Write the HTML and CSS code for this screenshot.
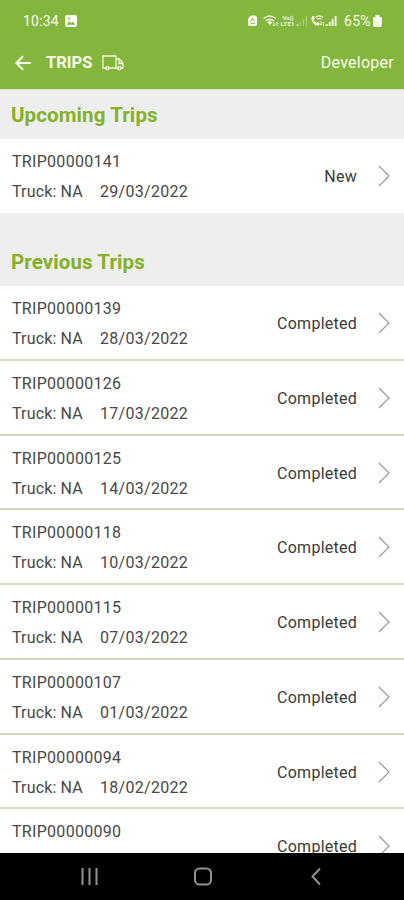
FILE: index.html
```html
<!DOCTYPE html>
<html lang="en">
<head>
<meta charset="utf-8">
<meta name="viewport" content="width=device-width, initial-scale=1">
<title>Trips</title>
<link rel="stylesheet" href="styles.css">
</head>
<body>
<div class="screen">
  <header class="top">
    <div class="status">
      <span class="clock">10:34</span>
      <svg class="picture" width="12" height="12" viewBox="0 0 12 12"><rect width="12" height="12" rx="2" fill="#fbfff0"/><path d="M1.8 9.8 4.5 6.2l1.8 2 1.6-1.8 2.4 3.4z" fill="#84b63d"/><circle cx="4" cy="3.6" r="1" fill="#84b63d"/></svg>
      <svg class="signals" width="92" height="14" viewBox="0 0 92 14">
        <path d="M0 4.500 3 1.500h3.500q2.500 0 2.500 2.500v6q0 2-2 2h-5q-2 0-2-2z" fill="#fbfff0"/>
        <path d="M2.500 7.500 4.500 4.500l2 3M2.800 9.500h3.800" fill="none" stroke="#84b63d" stroke-width="1"/>
        <path d="M15.500 4.500q6-5 12.500 0M17.800 7q4-3.300 8 0" fill="none" stroke="#eff6dc" stroke-width="1.500"/>
        <path d="M19.300 8.200q2.500-1.800 5 0l-2.500 2.900z" fill="#fbfff0"/>
        <path d="M26 8v4m-1.500-1.500L26 12l1.400-1.500M29 12V8m-1.400 1.500L29 8l1.400 1.500" fill="none" stroke="#eff6dc" stroke-width=".8"/>
        <text class="tiny" x="34.500" y="6.300" textLength="11">Vo))</text>
        <text class="tiny" x="32.500" y="12.300" textLength="14">LTE1</text>
        <path d="M49.500 12v-2" stroke="#eff6dc" stroke-width="1.500"/>
        <path d="M52.500 12V8M55.500 12V5M58.500 12V2" stroke="#a9cc77" stroke-width="1.300"/>
        <path d="M64 2.500q1.500-1 2.200.6l.5 1.400-1.100 1.200q1 2.200 3 3.200l1.300-.8 1.700 1.100q.4 1.700-1.200 2.300-3 .4-5.400-2.800-2.500-3.700-1-6.200z" fill="#fbfff0"/>
        <path d="M67.300 3.200q4-2.800 7.700 0M69 5.300q2.200-1.600 4.500 0" fill="none" stroke="#fbfff0" stroke-width="1.200"/>
        <path d="M73 7v4m-1.300-1.300L73 11l1.200-1.300M75.500 12V8" fill="none" stroke="#eff6dc" stroke-width=".9"/>
        <path d="M78.700 12v-2M81.700 12V8M84.600 12V5M87.600 12V2" stroke="#fbfff0" stroke-width="1.800"/>
      </svg>
      <span class="percent">65%</span>
      <svg class="battery" width="9" height="12" viewBox="0 0 9 12"><path d="M2.500 0h4v2H8q.8 0 .8.800V11q0 .8-.8.800H1Q.2 11.800.2 11V2.800Q.2 2 1 2h1.500z" fill="#fbfff0"/></svg>
    </div>
    <div class="bar">
      <svg class="back" width="17" height="16" viewBox="0 0 17 16"><path d="M8 1.200 1.500 8 8 14.800M1.800 8H16" fill="none" stroke="#f8fdeb" stroke-width="2.200"/></svg>
      <h1>TRIPS</h1>
      <svg class="truck" width="22" height="16" viewBox="0 0 22 16"><path d="M4 13H1V1h13v12H7M14 4h3.500l3.500 4.500V13h-2M14 13h2M17 4.500V8.500h4" fill="none" stroke="#eff6dc" stroke-width="1.300"/><circle cx="5.500" cy="13.200" r="1.500" fill="none" stroke="#fbfff0" stroke-width="1.300"/><circle cx="17.300" cy="13.200" r="1.500" fill="none" stroke="#fbfff0" stroke-width="1.300"/></svg>
      <span class="user">Developer</span>
    </div>
  </header>
  <main class="content">
    <h2 class="upcoming">Upcoming Trips</h2>
    <ul>
      <li><div class="trip"><span>TRIP00000141</span><span class="detail"><span class="truck-name">Truck: NA</span><span>29/03/2022</span></span></div><span class="state">New</span><svg class="chevron" viewBox="0 0 12 22"><path d="m1 1 10 10L1 21"/></svg></li>
    </ul>
    <h2 class="previous">Previous Trips</h2>
    <ul>
      <li><div class="trip"><span>TRIP00000139</span><span class="detail"><span class="truck-name">Truck: NA</span><span>28/03/2022</span></span></div><span class="state">Completed</span><svg class="chevron" viewBox="0 0 12 22"><path d="m1 1 10 10L1 21"/></svg></li>
      <li><div class="trip"><span>TRIP00000126</span><span class="detail"><span class="truck-name">Truck: NA</span><span>17/03/2022</span></span></div><span class="state">Completed</span><svg class="chevron" viewBox="0 0 12 22"><path d="m1 1 10 10L1 21"/></svg></li>
      <li><div class="trip"><span>TRIP00000125</span><span class="detail"><span class="truck-name">Truck: NA</span><span>14/03/2022</span></span></div><span class="state">Completed</span><svg class="chevron" viewBox="0 0 12 22"><path d="m1 1 10 10L1 21"/></svg></li>
      <li><div class="trip"><span>TRIP00000118</span><span class="detail"><span class="truck-name">Truck: NA</span><span>10/03/2022</span></span></div><span class="state">Completed</span><svg class="chevron" viewBox="0 0 12 22"><path d="m1 1 10 10L1 21"/></svg></li>
      <li><div class="trip"><span>TRIP00000115</span><span class="detail"><span class="truck-name">Truck: NA</span><span>07/03/2022</span></span></div><span class="state">Completed</span><svg class="chevron" viewBox="0 0 12 22"><path d="m1 1 10 10L1 21"/></svg></li>
      <li><div class="trip"><span>TRIP00000107</span><span class="detail"><span class="truck-name">Truck: NA</span><span>01/03/2022</span></span></div><span class="state">Completed</span><svg class="chevron" viewBox="0 0 12 22"><path d="m1 1 10 10L1 21"/></svg></li>
      <li><div class="trip"><span>TRIP00000094</span><span class="detail"><span class="truck-name">Truck: NA</span><span>18/02/2022</span></span></div><span class="state">Completed</span><svg class="chevron" viewBox="0 0 12 22"><path d="m1 1 10 10L1 21"/></svg></li>
      <li><div class="trip"><span>TRIP00000090</span></div><span class="state">Completed</span><svg class="chevron" viewBox="0 0 12 22"><path d="m1 1 10 10L1 21"/></svg></li>
    </ul>
  </main>
  <nav class="system">
    <svg width="404" height="47" viewBox="0 0 404 47" fill="none" stroke="#929292" stroke-width="2"><path d="M82.500 15v17M89.500 15v17M96.500 15v17"/><rect x="195" y="15.500" width="16" height="16" rx="4.500"/><path d="m320 15.500-7.500 8 7.500 8"/></svg>
  </nav>
</div>
</body>
</html>
```
FILE: styles.css
```css
* { box-sizing: border-box; }

body {
  margin: 0;
  font-family: Roboto, "Liberation Sans", sans-serif;
  color: #484848;
}

svg { display: block; flex: none; }

.screen {
  display: flex;
  flex-direction: column;
  width: 404px;
  height: 900px;
  overflow: hidden;
  background: #eeeeee;
}

.top {
  flex: none;
  height: 89px;
  background: #84b63d;
  color: #f8fdeb;
}

.status {
  display: flex;
  align-items: center;
  height: 42px;
  padding: 0 21px 0 23px;
  font-size: 14px;
}

.clock { width: 36px; letter-spacing: 0.2px; }
.picture { margin-left: 6px; }
.signals { margin-left: auto; }
.percent { width: 29px; margin-left: 4px; letter-spacing: 0.3px; }
.battery { margin-right: 1px; }
.tiny { fill: #eff6dc; font-size: 6px; font-weight: 700; }

.bar {
  display: flex;
  align-items: center;
  height: 41px;
  padding: 0 10px 0 15px;
}

h1 {
  width: 46px;
  margin: 0 0 0 14px;
  font-size: 16.5px;
  font-weight: 700;
}

.truck { margin-left: 10px; }
.user { margin-left: auto; font-size: 16px; letter-spacing: 0.25px; }

.content {
  flex: 1;
  min-height: 0;
  overflow: hidden;
  border-top: 1px solid #d8e6c3;
}

h2 {
  margin: 0;
  padding-left: 11px;
  color: #84b128;
  font-size: 20.5px;
  font-weight: 700;
  line-height: 24px;
  letter-spacing: 0.1px;
}

.upcoming { height: 49px; padding-top: 13px; }
.previous { height: 73px; padding-top: 37px; }

ul { margin: 0; padding: 0; list-style: none; }

li {
  display: flex;
  height: 74.750px;
  padding: 8px 14px 0 12px;
  border-bottom: 2px solid #d1d9b9;
  background: #ffffff;
  font-size: 16px;
}

li:only-child { height: 74px; border-bottom: 0; }

.trip {
  display: flex;
  flex-direction: column;
  flex: 1;
  line-height: 30px;
  letter-spacing: 0.3px;
}

.detail { display: flex; }
.truck-name { width: 88px; letter-spacing: 0.15px; }
.state { padding-top: 15px; line-height: 30px; letter-spacing: 0.25px; color: #3a3a3a; }

.chevron {
  width: 12px;
  height: 22px;
  margin: 18px 0 0 21px;
  fill: none;
  stroke: #999999;
  stroke-width: 1.2;
}

.system { flex: none; height: 47px; background: #000000; }
```
